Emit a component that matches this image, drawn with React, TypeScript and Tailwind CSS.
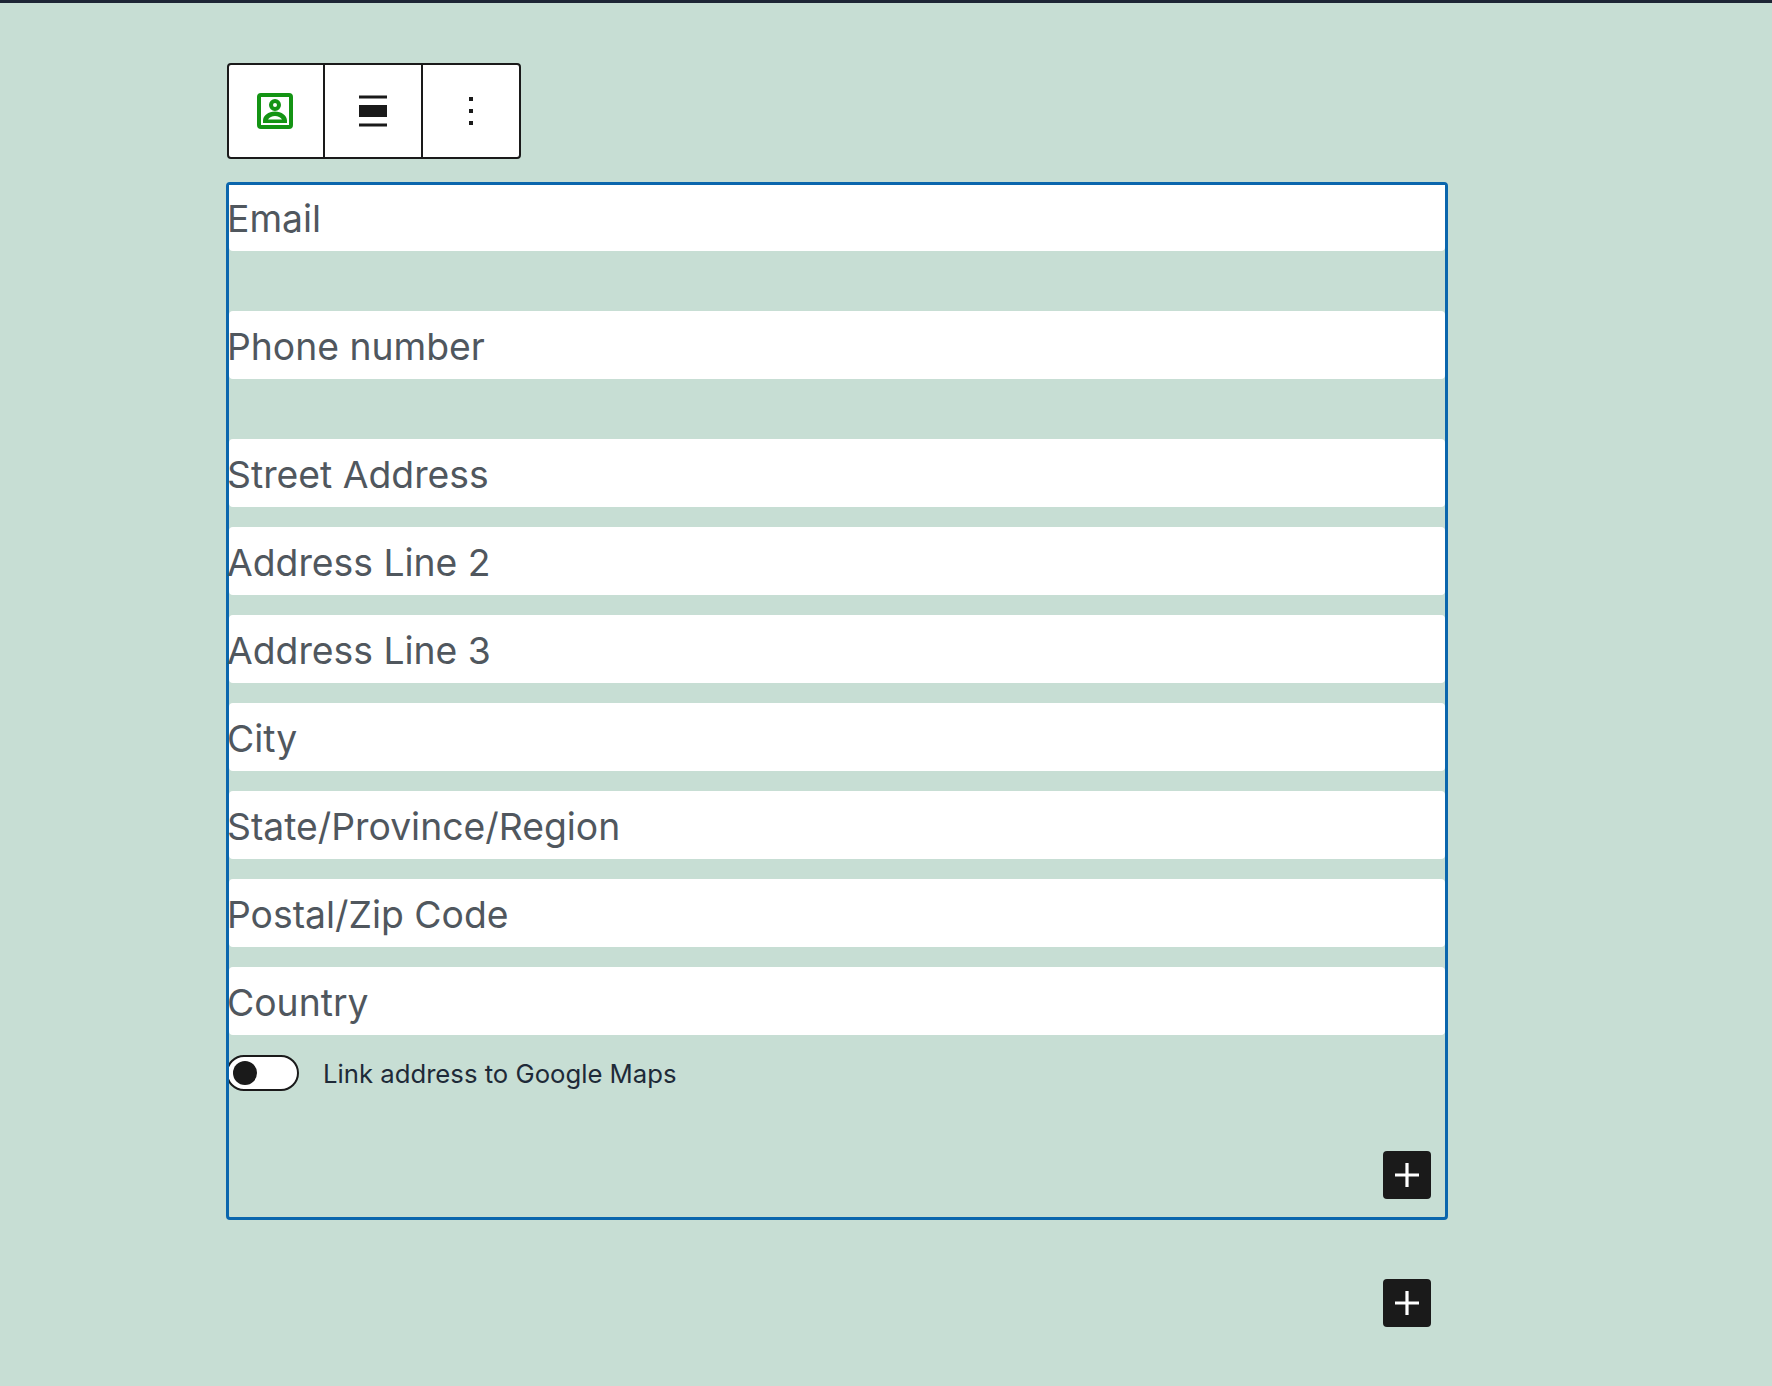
const rows: [string, string][] = [
  ["Email", "mb-[60px] h-[66px] rounded-b-[4px] pt-0.5"],
  ["Phone number", "mb-[60px] h-[68px] rounded-[4px] pt-1"],
  ["Street Address", "mb-5 h-[68px] rounded-[4px] pt-1"],
  ["Address Line 2", "mb-5 h-[68px] rounded-[4px] pt-1"],
  ["Address Line 3", "mb-5 h-[68px] rounded-[4px] pt-1"],
  ["City", "mb-5 h-[68px] rounded-[4px] pt-1"],
  ["State/Province/Region", "mb-5 h-[68px] rounded-[4px] pt-1"],
  ["Postal/Zip Code", "mb-5 h-[68px] rounded-[4px] pt-1"],
  ["Country", "h-[68px] rounded-[4px] pt-1"],
];

function Plus() {
  return (
    <button className="flex h-12 w-12 items-center justify-center rounded-[4px] bg-[#1a1a1a]">
      <svg width="48" height="48" viewBox="0 0 24 24" fill="#ffffff">
        <path d="M18 11.2h-5.2V6h-1.6v5.2H6v1.6h5.2V18h1.6v-5.2H18z" />
      </svg>
    </button>
  );
}

export default function App() {
  return (
    <div className="min-h-[1386px] border-t-[3px] border-[#1d2535] bg-[#c7ded4] pl-[226px] font-['Inter',sans-serif]">
      <div className="ml-px mt-[60px] flex h-[96px] w-[294px] items-stretch rounded-[4px] border-2 border-[#1a1a1a] bg-white">
        <div className="flex w-[96px] items-center justify-center border-r-2 border-[#1a1a1a] pr-[3px]">
          <svg width="48" height="48" viewBox="0 0 24 24" fill="none">
            <rect x="4" y="4" width="16" height="16" rx="1" stroke="#149414" strokeWidth="2" />
            <path
              fillRule="evenodd"
              fill="#149414"
              d="M12 6a3 3 0 1 1 0 6 3 3 0 0 1 0-6zm0 2a1 1 0 1 0 0 2 1 1 0 0 0 0-2zM6 18v-1.200c0-2.400 2.700-4.500 6-4.500s6 2.100 6 4.500V18zm2.500-1.800h7c-.7-1-2-1.700-3.500-1.700s-2.800.7-3.500 1.700z"
            />
          </svg>
        </div>
        <div className="flex w-[98px] items-center justify-center border-r-2 border-[#1a1a1a]">
          <svg width="48" height="48" viewBox="0 0 24 24" fill="#1a1a1a">
            <path d="M5 15h14V9H5v6zm0 4.800h14v-1.500H5v1.500zM5 4.200v1.500h14V4.200H5z" />
          </svg>
        </div>
        <div className="flex flex-1 items-center justify-center">
          <svg width="48" height="48" viewBox="0 0 24 24" fill="#1a1a1a">
            <path d="M13 19h-2v-2h2v2zm0-6h-2v-2h2v2zm0-6h-2V5h2v2z" />
          </svg>
        </div>
      </div>
      <div className="mt-[23px] h-[1038px] w-[1222px] rounded-[4px] border-[3px] border-[#0b66ad]">
        {rows.map(([label, cls]) => (
          <div
            key={label}
            className={`flex items-center bg-white text-[37.3px] leading-none text-[#50575e] ${cls}`}
          >
            <span className="-ml-0.5">{label}</span>
          </div>
        ))}
        <div className="mt-[19px] flex items-center">
          <div className="h-9 w-[70px] overflow-hidden">
            <div className="-ml-[3px] flex h-9 w-[73px] items-center rounded-full border-2 border-[#1a1a1a] bg-white pl-[5px]">
              <div className="h-6 w-6 rounded-full bg-[#1a1a1a]" />
            </div>
          </div>
          <span className="ml-6 pt-0.5 text-[25.7px] leading-9 text-[#1e2a38]">Link address to Google Maps</span>
        </div>
        <div className="mt-[59px] flex justify-end pr-[14px]">
          <Plus />
        </div>
      </div>
      <div className="mt-[59px] flex w-[1223px] justify-end pr-[18px]">
        <Plus />
      </div>
    </div>
  );
}
